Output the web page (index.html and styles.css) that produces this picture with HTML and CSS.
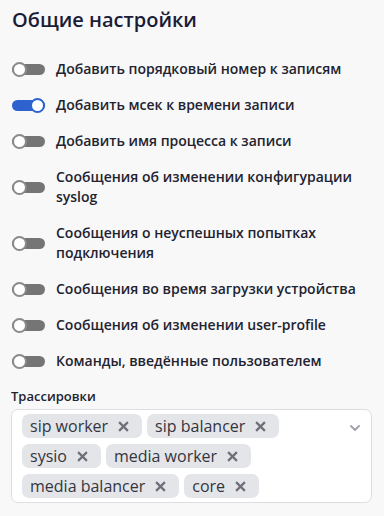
FILE: index.html
```html
<!DOCTYPE html>
<html lang="ru">

<head>
    <meta charset="UTF-8">
    <meta name="viewport" content="width=device-width, initial-scale=1.0">
    <title>Общие настройки</title>
    <link rel="stylesheet" href="styles.css">
</head>

<body>
    <h1>Общие настройки</h1>

    <div class="settings-list">
        <label class="setting">
            <span class="switch"><span class="knob"></span></span>
            <span class="setting-text">Добавить порядковый номер к записям</span>
        </label>
        <label class="setting">
            <span class="switch on"><span class="knob"></span></span>
            <span class="setting-text">Добавить мсек к времени записи</span>
        </label>
        <label class="setting">
            <span class="switch"><span class="knob"></span></span>
            <span class="setting-text">Добавить имя процесса к записи</span>
        </label>
        <label class="setting">
            <span class="switch"><span class="knob"></span></span>
            <span class="setting-text">Сообщения об изменении конфигурации syslog</span>
        </label>
        <label class="setting">
            <span class="switch"><span class="knob"></span></span>
            <span class="setting-text">Сообщения о неуспешных попытках подключения</span>
        </label>
        <label class="setting">
            <span class="switch"><span class="knob"></span></span>
            <span class="setting-text">Сообщения во время загрузки устройства</span>
        </label>
        <label class="setting">
            <span class="switch"><span class="knob"></span></span>
            <span class="setting-text">Сообщения об изменении user-profile</span>
        </label>
        <label class="setting">
            <span class="switch"><span class="knob"></span></span>
            <span class="setting-text">Команды, введённые пользователем</span>
        </label>
    </div>

    <div class="field">
        <div class="field-label">Трассировки</div>
        <div class="multiselect">
            <div class="chips">
                <span class="chip">sip worker <svg class="chip-x" viewBox="0 0 10 10"><path d="M1 1 L9 9 M9 1 L1 9" /></svg></span>
                <span class="chip">sip balancer <svg class="chip-x" viewBox="0 0 10 10"><path d="M1 1 L9 9 M9 1 L1 9" /></svg></span>
                <span class="chip">sysio <svg class="chip-x" viewBox="0 0 10 10"><path d="M1 1 L9 9 M9 1 L1 9" /></svg></span>
                <span class="chip">media worker <svg class="chip-x" viewBox="0 0 10 10"><path d="M1 1 L9 9 M9 1 L1 9" /></svg></span>
                <span class="chip">media balancer <svg class="chip-x" viewBox="0 0 10 10"><path d="M1 1 L9 9 M9 1 L1 9" /></svg></span>
                <span class="chip">core <svg class="chip-x" viewBox="0 0 10 10"><path d="M1 1 L9 9 M9 1 L1 9" /></svg></span>
            </div>
            <svg class="chevron" width="12" height="8" viewBox="0 0 12 8">
                <path d="M2 2 L6 6 L10 2" fill="none" stroke="#a3a3ad" stroke-width="2" stroke-linecap="round" stroke-linejoin="round" />
            </svg>
        </div>
    </div>
</body>

</html>
```

FILE: styles.css
```css
body {
    font-family: "Open Sans", "Noto Sans", sans-serif;
    margin: 0;
    padding: 8px 12px 0 11px;
    background-color: #f8f8f9;
    color: #1f2133;
}

h1 {
    margin: 0 0 0 1px;
    font-size: 20px;
    line-height: 24px;
    font-weight: 600;
    color: #1b1c36;
}

.settings-list {
    display: flex;
    flex-direction: column;
    gap: 16px;
    margin-top: 27px;
}

.setting {
    display: flex;
    align-items: center;
    gap: 11px;
    cursor: pointer;
}

.setting-text {
    font-size: 14px;
    line-height: 20px;
    font-weight: 600;
    color: #22232f;
}

.switch {
    position: relative;
    flex: none;
    width: 33px;
    height: 11px;
    margin-left: 1px;
    border-radius: 6px;
    background-color: #757575;
}

.switch .knob {
    position: absolute;
    top: -2px;
    left: 0;
    width: 11px;
    height: 11px;
    border: 2px solid #8a8a8a;
    border-radius: 50%;
    background: #fff;
}

.switch.on {
    background-color: #2d62cf;
}

.switch.on .knob {
    left: auto;
    right: 0;
    border-color: #2d62cf;
}

.field {
    margin-top: 16px;
}

.field-label {
    font-size: 13px;
    line-height: 18px;
    font-weight: 600;
    color: #22232f;
}

.multiselect {
    display: flex;
    align-items: flex-start;
    margin-top: 4px;
    padding: 4px 10px 4px 10px;
    background: #fff;
    border: 1px solid #dedee2;
    border-radius: 7px;
}

.chips {
    flex: 1;
    display: flex;
    flex-wrap: wrap;
    gap: 6px 5px;
}

.chip {
    display: inline-flex;
    align-items: center;
    height: 24px;
    padding: 0 13px 0 8px;
    border-radius: 7px;
    background-color: #e4e5e8;
    font-size: 16px;
    color: #34353f;
}

.chip-x {
    width: 11px;
    height: 11px;
    margin-left: 10px;
    fill: none;
    stroke: #6e6f78;
    stroke-width: 2;
}

.chevron {
    flex: none;
    margin-top: 10px;
}
```
